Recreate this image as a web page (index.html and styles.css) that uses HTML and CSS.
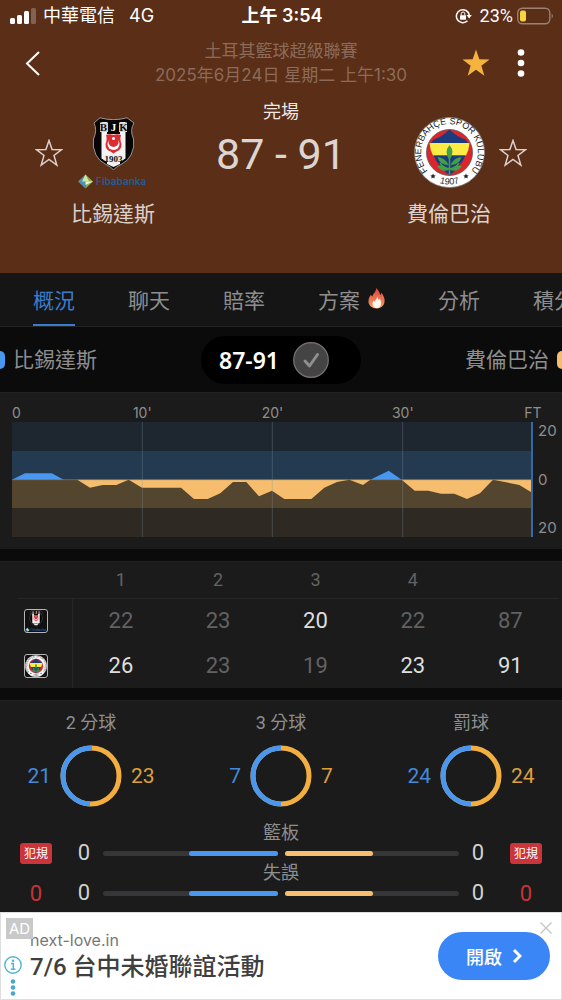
FILE: index.html
```html
<!DOCTYPE html>
<html lang="zh-Hant">
<head>
    <meta charset="utf-8">
    <meta name="viewport" content="width=device-width">
    <title>比錫達斯 87-91 費倫巴治</title>
    <link rel="stylesheet" href="styles.css">
</head>
<body>
    <!-- shared shapes -->
    <svg class="defs" aria-hidden="true">
        <symbol id="star" viewBox="0 0 28 28">
            <path d="M14 1.5 L17.1 10.6 L26.6 10.7 L19 16.5 L21.8 26 L14 20.4 L6.2 26 L9 16.5 L1.4 10.7 L10.9 10.6 Z"/>
        </symbol>
    </svg>

    <header class="match-header">
        <div class="status-bar">
            <div class="carrier">
                <svg width="26" height="18" viewBox="0 0 26 18" fill="#fff" aria-hidden="true">
                    <rect x="0" y="11" width="5" height="6" rx="1.500"/>
                    <rect x="7" y="8" width="5" height="9" rx="1.500"/>
                    <rect x="14" y="4" width="5" height="13" rx="1.500"/>
                    <rect x="21" y="1" width="5" height="16" rx="1.500" opacity=".25"/>
                </svg>
                <span>中華電信</span>
                <span class="network">4G</span>
            </div>
            <div class="clock">上午 3:54</div>
            <div class="battery">
                <svg width="17" height="16" viewBox="0 0 17 16" fill="none" aria-hidden="true">
                    <path d="M12.500 12.800 A6.500 6.500 0 1 1 14.300 7" stroke="#fff" stroke-width="1.500"/>
                    <path d="M11.500 7 H16.800 L14.200 10.500 Z" fill="#fff"/>
                    <rect x="5" y="7.200" width="6" height="4.500" rx=".7" fill="#fff"/>
                    <path d="M6.200 7.500 V5.800 a1.800 1.800 0 0 1 3.600 0 V7.500" stroke="#fff"/>
                </svg>
                <span>23%</span>
                <svg width="37" height="18" viewBox="0 0 37 18" aria-hidden="true">
                    <rect x=".8" y="1.200" width="32" height="15.600" rx="4.500" fill="none" stroke="#9b8174" stroke-width="1.400"/>
                    <rect x="3" y="3.500" width="6" height="11" rx="2" fill="#fad43c"/>
                    <path d="M34.700 6.500 Q37 9 34.700 11.500 Z" fill="#9b8174"/>
                </svg>
            </div>
        </div>

        <div class="top-nav">
            <button class="icon-btn back" aria-label="返回">
                <svg width="16" height="28" viewBox="0 0 16 28"><path d="M14 3 L2 14.500 L14 26" fill="none" stroke="#fff" stroke-width="2"/></svg>
            </button>
            <div class="league">
                <div>土耳其籃球超級聯賽</div>
                <div>2025年6月24日 星期二 上午1:30</div>
            </div>
            <div class="nav-actions">
                <button class="icon-btn fav-on" aria-label="收藏比賽"><svg width="30" height="30"><use href="#star"/></svg></button>
                <button class="icon-btn" aria-label="更多">
                    <svg width="8" height="28" viewBox="0 0 8 28" fill="#fff"><circle cx="4" cy="3.500" r="3.300"/><circle cx="4" cy="14" r="3.300"/><circle cx="4" cy="24.500" r="3.300"/></svg>
                </button>
            </div>
        </div>

        <div class="teams">
            <button class="icon-btn fav-off" aria-label="收藏比錫達斯"><svg width="28" height="28"><use href="#star"/></svg></button>
            <div class="team">
                <svg class="crest" viewBox="0 0 71 71" role="img" aria-label="Beşiktaş">
                    <g id="bjk">
                        <path d="M16 6 L22 .8 Q35.500 4.500 49 .8 L56 6 Q51.500 13 55.500 22 Q57 30 53 38 Q50 44 43 47.500 Q38 49.500 35.500 53 Q33 49.500 28 47.500 Q21 44 18 38 Q14 30 15.500 22 Q19.500 13 16 6 Z" fill="#060606" stroke="#a9a29e" stroke-width=".9"/>
                        <path d="M23.500 5 H29 V44.500 L23.500 41.500 Z M42 5 H47.500 V41.500 L42 44.500 Z" fill="#f4f4f4"/>
                        <path d="M29 17 H42 V47 L35.500 50 L29 47 Z" fill="#f4f4f4"/>
                        <path d="M22 5.500 H30 V15 H22 Z M41 5.500 H49 V15 H41 Z" fill="#d8d8d8"/>
                        <path d="M30 3 H41 V17 H30 Z" fill="#060606"/>
                        <text class="crest-letter" x="25.500" y="14" fill="#111">B</text>
                        <text class="crest-letter" x="35.500" y="14" fill="#fff">J</text>
                        <text class="crest-letter" x="45.500" y="14" fill="#111">K</text>
                        <path d="M28 18 Q31.500 16.500 35.500 18 Q39.500 16.500 43 18 Q41.500 22 43.500 27 Q43.500 33 38.500 34.500 L35.500 36.500 L32.500 34.500 Q27.500 33 27.500 27 Q29.500 22 28 18 Z" fill="#dc2b32"/>
                        <circle cx="35.500" cy="27" r="6" fill="#fff"/>
                        <circle cx="35.500" cy="24.800" r="5.100" fill="#dc2b32"/>
                        <circle cx="35.500" cy="21.500" r="1.500" fill="#fff"/>
                        <path d="M25.500 38 H45.500 V43 L35.500 47.500 L25.500 43 Z" fill="#ececec"/>
                        <text class="crest-year" x="35.500" y="44.500">1903</text>
                        <path d="M7.500 57.500 L0 64.500 L7.500 71.500 Z" fill="#4f91b4"/>
                        <path d="M7.500 57.500 L15 64.500 L7.500 71.500 Z" fill="#7eb546"/>
                        <path d="M7.500 57.500 L11 64.500 H4 Z" fill="#d2e7a2"/>
                        <path d="M7.500 64.500 H15 L7.500 68 Z" fill="#eef5d5"/>
                        <text class="crest-sponsor" x="18" y="68">Fibabanka</text>
                    </g>
                </svg>
                <div class="team-name">比錫達斯</div>
            </div>
            <div class="result">
                <div class="result-state">完場</div>
                <div class="result-score">87 - 91</div>
            </div>
            <div class="team">
                <svg class="crest" viewBox="0 0 71 71" role="img" aria-label="Fenerbahçe">
                    <defs>
                        <path id="ring-top" d="M15.400 55.600 A28.400 28.400 0 1 1 55.600 55.600"/>
                        <path id="ring-bottom" d="M15.500 60.500 A32 32 0 0 0 55.500 60.500"/>
                    </defs>
                    <g id="fener">
                        <circle cx="35.500" cy="35.500" r="35" fill="#fff" stroke="#8c8581" stroke-width=".8"/>
                        <circle cx="35.500" cy="35.500" r="23" fill="#d9262c" stroke="#555" stroke-width=".8"/>
                        <path d="M35.500 12.500 Q28 20 19.500 22.500 L17 26 H54 L51.500 22.500 Q43 20 35.500 12.500 Z" fill="#1b3c7c"/>
                        <path d="M15.500 26 H55.500 Q55 33 52 38.500 H19 Q16 33 15.500 26 Z" fill="#fdeb45"/>
                        <path d="M19.500 38.500 H51.500 Q47 49 35.500 58.500 Q24 49 19.500 38.500 Z" fill="#1b3c7c"/>
                        <path d="M35.500 58 V38 M35.500 52 Q29 51 26 46 M35.500 52 Q42 51 45 46" fill="none" stroke="#43a047" stroke-width="1.500"/>
                        <path d="M35.500 28 Q29.500 35 35.500 43 Q41.500 35 35.500 28 Z M23.500 40 Q31 40.500 34.500 48 Q26 48 23.500 40 Z M47.500 40 Q40 40.500 36.500 48 Q45 48 47.500 40 Z M23 49 Q30 47 35 53 Q27 55.500 23 49 Z M48 49 Q41 47 36 53 Q44 55.500 48 49 Z" fill="#43a047"/>
                        <text class="ring-name"><textPath href="#ring-top" startOffset="50%">FENERBAHÇE SPOR KULÜBÜ</textPath></text>
                        <text class="ring-year"><textPath href="#ring-bottom" startOffset="50%">1907</textPath></text>
                        <path d="M19 56.500 l.8 1.700 1.900.2 -1.400 1.300 .4 1.900 -1.700-1 -1.700 1 .4-1.900 -1.400-1.300 1.900-.2z" fill="#222"/>
                        <path d="M52 56.500 l.8 1.700 1.900.2 -1.400 1.300 .4 1.900 -1.700-1 -1.700 1 .4-1.900 -1.400-1.300 1.900-.2z" fill="#222"/>
                    </g>
                </svg>
                <div class="team-name">費倫巴治</div>
            </div>
            <button class="icon-btn fav-off" aria-label="收藏費倫巴治"><svg width="28" height="28"><use href="#star"/></svg></button>
        </div>
    </header>

    <nav class="tabs">
        <a href="#" class="active">概況</a>
        <a href="#">聊天</a>
        <a href="#">賠率</a>
        <a href="#">方案
            <svg width="17" height="21" viewBox="0 0 17 21" aria-hidden="true">
                <defs><linearGradient id="flame" x1="0" y1="0" x2="0" y2="1"><stop offset="0" stop-color="#e2413c"/><stop offset="1" stop-color="#f6a05c"/></linearGradient></defs>
                <path d="M8 0 C10 2 12 4 12 7 C13 6.500 13.400 5.500 13.300 4.500 C16 8 17 11 16.500 14 C16 18 12.500 20.500 8.500 20.500 C4 20.500 .5 17.500 .5 13.500 C.4 10 2 8 3 6.500 C3.200 7.700 3.700 8.300 4.500 8.500 C5 5 8.500 4 8 0 Z" fill="url(#flame)"/>
                <path d="M9.300 8.500 C9.500 10 10.500 10.500 10.800 12 C11.500 11.500 11.500 11 11.600 10.500 C13 12.500 13.300 14.500 13 16.500 C12.500 19 10.800 20 8.800 20 C6.500 20 4.500 18.500 4.500 16 C4.400 14.300 5 13.300 5.700 12.500 C6 13.300 6.300 13.500 6.800 13.700 C7 12 9 11 9.300 8.500 Z" fill="#fff6ec"/>
            </svg>
        </a>
        <a href="#">分析</a>
        <a href="#">積分</a>
    </nav>

    <main>
        <div class="legend">
            <div class="legend-team home">比錫達斯</div>
            <div class="score-pill">
                <span>87-91</span>
                <svg width="36" height="36" viewBox="0 0 36 36" aria-hidden="true">
                    <circle cx="18" cy="18" r="17.300" fill="#444" stroke="#7c7474" stroke-width="1.200"/>
                    <path d="M12 19 L16.500 24 L24.500 12.500" fill="none" stroke="#8e8e8e" stroke-width="3" stroke-linecap="round" stroke-linejoin="round"/>
                </svg>
            </div>
            <div class="legend-team away">費倫巴治</div>
        </div>

        <section class="panel chart">
            <div class="chart-time">
                <span>0</span><span>10'</span><span>20'</span><span>30'</span><span>FT</span>
            </div>
            <svg class="chart-plot" viewBox="0 0 1563 345" preserveAspectRatio="none" role="img" aria-label="分差走勢">
                <rect width="1563" height="87" fill="#1e262f"/>
                <rect y="87" width="1563" height="86" fill="#243a51"/>
                <rect y="173" width="1563" height="86" fill="#54452e"/>
                <rect y="259" width="1563" height="86" fill="#2e2923"/>
                <path d="M0 173 L39 154 H119 L155 173 Z M1075 173 L1130 146 L1169 173 Z" fill="#4a97f0"/>
                <path d="M196 173 L234 197 L272 189 H313 L350 173 L390 197 H507 L546 231 H587 L625 214 L663 180 H703 L741 223 L780 206 L817 231 H898 L937 197 L975 180 L1012 173 L1053 189 L1075 173 Z" fill="#f5bd6d"/>
                <path d="M1169 173 L1208 206 H1249 L1287 215 H1327 L1365 231 L1404 214 L1443 173 L1522 189 L1563 214 V173 Z" fill="#f5bd6d"/>
                <path d="M0 173 H1563" stroke="#7e7d72" stroke-width="2"/>
                <path d="M391 0 V345 M781 0 V345 M1172 0 V345" stroke="#8a98a4" stroke-opacity=".3" stroke-width="3"/>
                <path d="M1560 0 V345" stroke="#3569a5" stroke-width="6"/>
            </svg>
            <div class="chart-scale"><span>20</span><span>0</span><span>20</span></div>
        </section>

        <section class="panel quarters">
            <table>
                <thead>
                    <tr><th class="crest-col"></th><th>1</th><th>2</th><th>3</th><th>4</th><th></th></tr>
                </thead>
                <tbody>
                    <tr>
                        <th class="crest-col"><svg class="mini-crest" viewBox="0 0 71 71" role="img" aria-label="比錫達斯"><use href="#bjk"/></svg></th>
                        <td>22</td><td>23</td><td class="won">20</td><td>22</td><td>87</td>
                    </tr>
                    <tr>
                        <th class="crest-col"><svg class="mini-crest" viewBox="0 0 71 71" role="img" aria-label="費倫巴治"><use href="#fener"/></svg></th>
                        <td class="won">26</td><td>23</td><td>19</td><td class="won">23</td><td class="won">91</td>
                    </tr>
                </tbody>
            </table>
        </section>

        <section class="panel stats">
            <div class="rings">
                <div class="ring-stat">
                    <h3>2 分球</h3>
                    <span class="home-value">21</span>
                    <svg class="ring" viewBox="-31 -31 62 62"><circle class="ring-away" r="28"/><circle class="ring-home" r="28" pathLength="44" stroke-dasharray="22 22" transform="rotate(-88) scale(1 -1)"/></svg>
                    <span class="away-value">23</span>
                </div>
                <div class="ring-stat">
                    <h3>3 分球</h3>
                    <span class="home-value">7</span>
                    <svg class="ring" viewBox="-31 -31 62 62"><circle class="ring-away" r="28"/><circle class="ring-home" r="28" pathLength="14" stroke-dasharray="7 7" transform="rotate(-90) scale(1 -1)"/></svg>
                    <span class="away-value">7</span>
                </div>
                <div class="ring-stat">
                    <h3>罰球</h3>
                    <span class="home-value">24</span>
                    <svg class="ring" viewBox="-31 -31 62 62"><circle class="ring-away" r="28"/><circle class="ring-home" r="28" pathLength="48" stroke-dasharray="24 24" transform="rotate(-90) scale(1 -1)"/></svg>
                    <span class="away-value">24</span>
                </div>
            </div>

            <div class="compare">
                <div class="fouls"><span class="foul-badge">犯規</span><span class="foul-count">0</span></div>
                <div class="bars">
                    <div class="bar-row">
                        <h3>籃板</h3>
                        <span>0</span>
                        <div class="track home"><div class="fill" style="width: 51%"></div></div>
                        <div class="track away"><div class="fill" style="width: 51%"></div></div>
                        <span>0</span>
                    </div>
                    <div class="bar-row">
                        <h3>失誤</h3>
                        <span>0</span>
                        <div class="track home"><div class="fill" style="width: 51%"></div></div>
                        <div class="track away"><div class="fill" style="width: 51%"></div></div>
                        <span>0</span>
                    </div>
                </div>
                <div class="fouls"><span class="foul-badge">犯規</span><span class="foul-count">0</span></div>
            </div>
        </section>
    </main>

    <aside class="ad">
        <span class="ad-badge">AD</span>
        <div class="ad-info">
            <svg width="18" height="42" viewBox="0 0 18 42" fill="none" aria-hidden="true">
                <circle cx="9" cy="10" r="8.200" stroke="#50b4d2" stroke-width="1.400"/>
                <circle cx="9" cy="5.700" r="1.200" fill="#50b4d2"/>
                <path d="M7 8.500 H9.300 V14 M6.800 14.200 H11.500" stroke="#50b4d2" stroke-width="1.500"/>
                <g fill="#45a9cb"><circle cx="9" cy="26.500" r="2.300"/><circle cx="9" cy="32.500" r="2.300"/><circle cx="9" cy="38.500" r="2.300"/></g>
            </svg>
        </div>
        <div class="ad-text">
            <div class="ad-domain">next-love.in</div>
            <div class="ad-title">7/6 台中未婚聯誼活動</div>
        </div>
        <a href="#" class="ad-open">開啟
            <svg width="10" height="16" viewBox="0 0 10 16" aria-hidden="true"><path d="M2 2 L8 8 L2 14" fill="none" stroke="#fff" stroke-width="3"/></svg>
        </a>
        <button class="ad-close" aria-label="關閉廣告">
            <svg width="12" height="12" viewBox="0 0 12 12"><path d="M.5 .5 L11.500 11.500 M11.500 .5 L.5 11.500" stroke="#c4c4c4" stroke-width="1.300"/></svg>
        </button>
    </aside>
</body>
</html>
```
FILE: styles.css
```css
* {
    box-sizing: border-box;
}

body {
    margin: 0;
    background: #0b0b0b;
    color: #8e8e8e;
    font-family: Inter, "Noto Sans CJK TC", sans-serif;
    overflow-x: hidden;
}

button {
    padding: 0;
    border: 0;
    background: none;
    font: inherit;
    cursor: pointer;
}

a {
    color: inherit;
    text-decoration: none;
}

h3 {
    margin: 0;
    font-weight: 400;
}

svg {
    display: block;
}

.defs {
    position: absolute;
    width: 0;
    height: 0;
}

/* header */
.match-header {
    background: #5a2e17;
    padding-bottom: 44px;
}

.status-bar {
    display: grid;
    grid-template-columns: 1fr auto 1fr;
    align-items: center;
    height: 32px;
    padding: 0 8px 0 10px;
    color: #fff;
    font-size: 18px;
    line-height: 24px;
}

.carrier,
.battery {
    display: flex;
    align-items: center;
    gap: 7px;
}

.network {
    margin-left: 7px;
}

.clock {
    font-weight: 600;
}

.battery {
    justify-content: flex-end;
    gap: 4px;
    font-family: Roboto, sans-serif;
}

.battery span {
    margin-left: 4px;
}

.icon-btn {
    flex: none;
}

.top-nav {
    display: grid;
    grid-template-columns: 1fr auto 1fr;
    align-items: center;
    height: 68px;
    padding: 0 25px 6px;
}

.back {
    justify-self: start;
}

.league {
    color: #8c6b5a;
    font-size: 17px;
    line-height: 24px;
    text-align: center;
}

.nav-actions {
    display: flex;
    justify-content: flex-end;
    align-items: center;
    gap: 26px;
    padding-right: 12px;
}

.fav-on {
    fill: #f4b23f;
}

.fav-off {
    fill: none;
    stroke: #dcd1cb;
    stroke-width: 1.5;
    padding-top: 39px;
}

.teams {
    display: flex;
    align-items: flex-start;
    gap: 8px;
    padding: 0 35px;
}

.team {
    display: flex;
    flex-direction: column;
    align-items: center;
    gap: 11px;
    width: 84px;
    padding-top: 17px;
}

.crest {
    width: 71px;
    height: 71px;
    overflow: visible;
}

.team-name {
    color: #dcd1cb;
    font-size: 21px;
    line-height: 30px;
    white-space: nowrap;
}

.result {
    flex: 1;
    text-align: center;
}

.result-state {
    color: #efe9e6;
    font-size: 18px;
    line-height: 24px;
}

.result-score {
    color: #dcd5d1;
    font-family: Roboto, sans-serif;
    font-size: 43px;
    line-height: 60px;
    white-space: nowrap;
}

.crest-letter {
    font: 700 11px "Liberation Serif", serif;
    text-anchor: middle;
}

.crest-year {
    font: 700 9px "Liberation Serif", serif;
    text-anchor: middle;
    fill: #111;
}

.crest-sponsor {
    font: 600 10px Inter, sans-serif;
    fill: #215c9f;
}

.ring-name,
.ring-year {
    font: 500 9px "Liberation Sans", sans-serif;
    text-anchor: middle;
    fill: #222;
}

/* tabs */
.tabs {
    display: flex;
    gap: 53px;
    height: 54px;
    padding-left: 33px;
    overflow: hidden;
    background: #151515;
    border-bottom: 1px solid #242424;
    font-size: 21px;
    line-height: 51px;
    white-space: nowrap;
}

.tabs a {
    display: flex;
    flex: none;
    gap: 8px;
    padding-top: 2px;
}

.tabs svg {
    margin-top: 13px;
}

.tabs .active {
    color: #3b7bcb;
    border-bottom: 2px solid #3b7bcb;
}

/* team legend */
.legend {
    display: grid;
    grid-template-columns: 1fr auto 1fr;
    align-items: center;
    height: 65px;
    font-size: 21px;
    line-height: 30px;
}

.legend-team {
    display: flex;
    align-items: center;
    gap: 8px;
}

.legend-team::before {
    content: "";
    width: 5px;
    height: 18px;
    background: #4a97f0;
    border-radius: 0 5px 5px 0;
}

.legend-team.away {
    flex-direction: row-reverse;
}

.legend-team.away::before {
    background: #f5bd6d;
    border-radius: 5px 0 0 5px;
}

.score-pill {
    display: flex;
    align-items: center;
    gap: 14px;
    height: 48px;
    padding: 0 32px 0 18px;
    border-radius: 24px;
    background: #000;
    color: #fff;
    font: 600 23px "Noto Sans", sans-serif;
}

.panel {
    background: #1b1b1b;
    border-top: 1px solid #222;
    margin-bottom: 12px;
}

/* point difference chart */
.chart {
    display: grid;
    grid-template-columns: 1fr 29px;
    padding: 10px 0 12px 12px;
}

.chart-time {
    display: flex;
    justify-content: space-between;
    font-size: 14px;
    line-height: 19px;
}

/* zero-width labels, so each one is centred on its grid line */
.chart-time span {
    display: flex;
    justify-content: center;
    width: 0;
}

.chart-time span:first-child {
    justify-content: flex-start;
}

.chart-plot {
    grid-row: 2;
    width: 100%;
    height: 115px;
}

.chart-scale {
    display: flex;
    grid-row: 2;
    flex-direction: column;
    justify-content: space-between;
    padding-left: 5px;
    font-size: 15px;
    line-height: 18px;
}

/* quarter scores */
.quarters {
    padding: 0 3px 0 18px;
}

table {
    width: 100%;
    border-collapse: collapse;
    table-layout: fixed;
    color: #626262;
    font-family: Roboto, sans-serif;
    font-size: 22px;
    text-align: center;
}

th,
td {
    height: 45px;
    padding: 0;
    font-weight: 400;
}

thead th {
    height: 36px;
    border-bottom: 1px solid #262626;
    font-size: 18px;
}

.crest-col {
    width: 54px;
}

tbody .crest-col {
    padding-left: 6px;
    border-right: 1px solid #262626;
}

.mini-crest {
    width: 24px;
    height: 24px;
    border: 1px solid #b5b5b5;
    border-radius: 3px;
    background: #111;
}

.won {
    color: #dedede;
}

/* team stats */
.stats {
    margin: 0;
    padding: 10px 0 3px;
}

.rings {
    display: grid;
    grid-template-columns: repeat(3, 1fr);
    gap: 8px;
}

.ring-stat {
    display: grid;
    grid-template-columns: 1fr 62px 1fr;
    align-items: center;
    gap: 10px 9px;
    font-family: Roboto, "Noto Sans CJK TC", sans-serif;
    font-size: 21px;
}

.ring-stat h3 {
    grid-column: 1 / -1;
    font-size: 18px;
    line-height: 24px;
    text-align: center;
}

.home-value {
    color: #4489dc;
    text-align: right;
}

.away-value {
    color: #dda03c;
}

.ring {
    width: 62px;
    height: 62px;
}

.ring circle {
    fill: none;
    stroke-width: 5;
}

.ring .ring-away {
    stroke: #f2ae40;
}

.ring .ring-home {
    stroke: #4a97f0;
}

.compare {
    display: flex;
    padding-top: 15px;
}

.fouls {
    display: flex;
    flex-direction: column;
    align-items: center;
    gap: 15px;
    width: 72px;
    padding-top: 21px;
}

.foul-badge {
    width: 32px;
    border-radius: 3px;
    background: #cb3438;
    color: #fff;
    font-size: 12px;
    line-height: 21px;
    text-align: center;
}

.foul-count {
    color: #c83336;
    font-family: Roboto, sans-serif;
    font-size: 22px;
    line-height: 30px;
}

.bars {
    flex: 1;
}

.bar-row {
    display: grid;
    grid-template-columns: 24px 1fr 1fr 24px;
    align-items: center;
    column-gap: 7px;
    color: #d0d0d0;
    font-family: Roboto, "Noto Sans CJK TC", sans-serif;
    font-size: 22px;
    line-height: 18px;
    text-align: center;
}

.bar-row h3 {
    grid-column: 1 / -1;
    color: #8e8e8e;
    font-size: 18px;
    line-height: 22px;
}

.track {
    display: flex;
    height: 5px;
    border-radius: 3px;
    background: #363638;
}

.track.home {
    justify-content: flex-end;
}

.fill {
    border-radius: 3px;
    background: #4a97f0;
}

.away .fill {
    background: #f5bd6d;
}

/* ad banner */
.ad {
    position: relative;
    display: flex;
    align-items: center;
    min-height: 88px;
    padding: 0 11px 0 3px;
    border: 1px solid #dedede;
    background: #fff;
}

.ad-info {
    align-self: flex-end;
    padding-bottom: 2px;
}

.ad-text {
    flex: 1;
    padding-left: 8px;
    color: #3f3f3f;
}

.ad-domain {
    color: #777;
    font-size: 16px;
    line-height: 22px;
}

.ad-title {
    font-family: Roboto, "Noto Sans CJK TC", sans-serif;
    font-size: 24px;
    font-weight: 500;
    line-height: 32px;
}

.ad-open {
    display: flex;
    align-items: center;
    justify-content: center;
    gap: 10px;
    width: 112px;
    height: 48px;
    border-radius: 24px;
    background: #3b86f6;
    color: #fff;
    font-size: 18px;
    font-weight: 500;
}

.ad-badge {
    position: absolute;
    top: 5px;
    left: 5px;
    padding: 0 3px;
    background: #c9c9c9;
    color: #fff;
    font-size: 15px;
    line-height: 21px;
}

.ad-close {
    position: absolute;
    top: 9px;
    right: 9px;
}
```
